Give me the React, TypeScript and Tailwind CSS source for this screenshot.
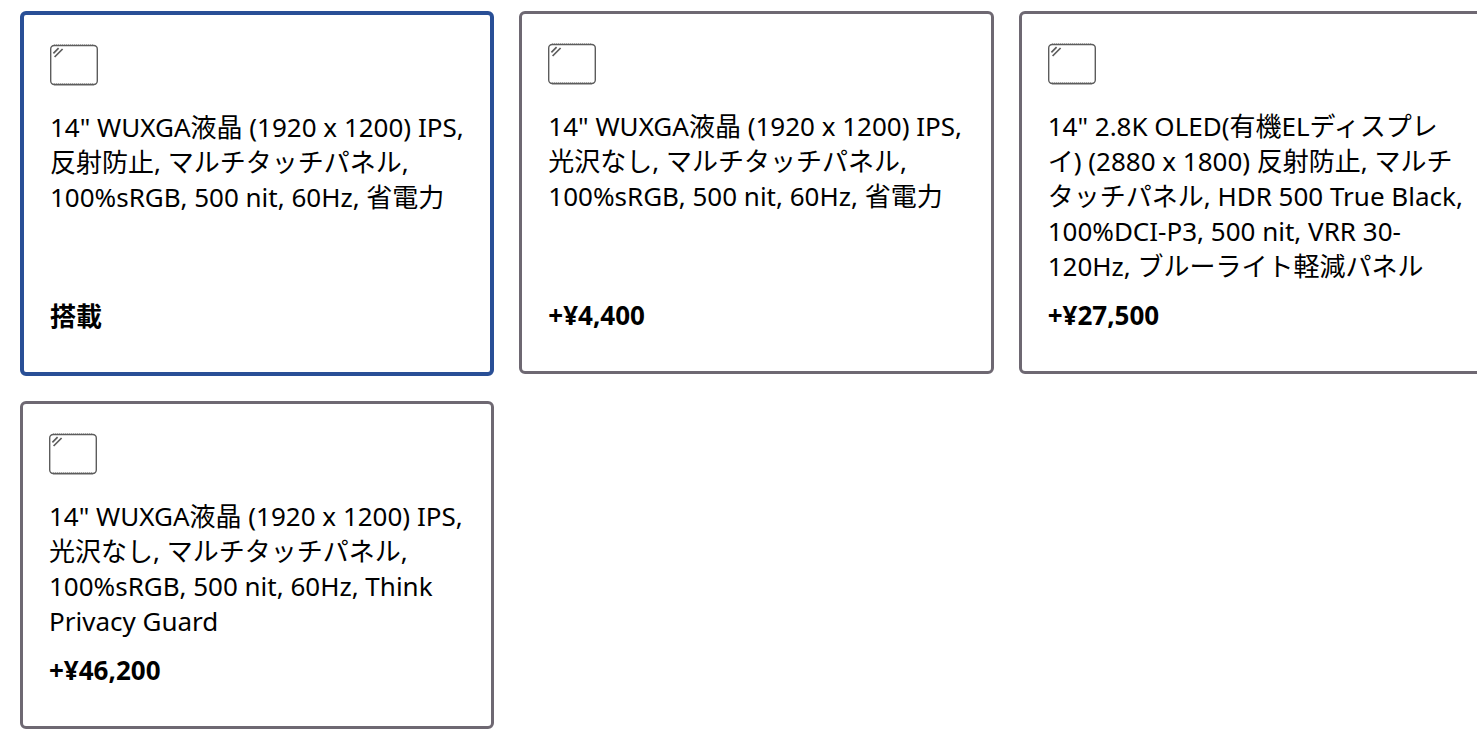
import React, { FC, useState } from "react";

type Option = {
  id: string;
  name: string;
  price: string;
};

const options: Option[] = [
  {
    id: "wuxga-touch",
    name: '14" WUXGA液晶 (1920 x 1200) IPS, 反射防止, マルチタッチパネル, 100%sRGB, 500 nit, 60Hz, 省電力',
    price: "搭載",
  },
  {
    id: "wuxga-matte",
    name: '14" WUXGA液晶 (1920 x 1200) IPS, 光沢なし, マルチタッチパネル, 100%sRGB, 500 nit, 60Hz, 省電力',
    price: "+¥4,400",
  },
  {
    id: "oled",
    name: '14" 2.8K OLED(有機ELディスプレイ) (2880 x 1800) 反射防止, マルチタッチパネル, HDR 500 True Black, 100%DCI-P3, 500 nit, VRR 30-120Hz, ブルーライト軽減パネル',
    price: "+¥27,500",
  },
  {
    id: "wuxga-privacy",
    name: '14" WUXGA液晶 (1920 x 1200) IPS, 光沢なし, マルチタッチパネル, 100%sRGB, 500 nit, 60Hz, Think Privacy Guard',
    price: "+¥46,200",
  },
];

const DisplayIcon: FC = () => (
  <svg
    className="size-12 shrink-0"
    viewBox="0 0 48 48"
    fill="none"
    stroke="#5c5c5c"
    aria-hidden="true"
  >
    <rect x="0.7" y="4.5" width="46.6" height="39" rx="3.5" strokeWidth="1.4" />
    <path d="M4 3.5H44M4 42.5H44" strokeDasharray="1 1" opacity="0.4" />
    <path d="M4 44.5H44" opacity="0.3" />
    <path d="M3.4 12.4L8.6 7.2M4.6 16L12.6 8" strokeWidth="1.7" />
  </svg>
);

type CardProps = {
  option: Option;
  selected: boolean;
  onSelect: () => void;
};

const OptionCard: FC<CardProps> = ({ option, selected, onSelect }) => (
  <button
    type="button"
    aria-pressed={selected}
    onClick={onSelect}
    className={`flex flex-col items-start rounded-md bg-white pt-[26px] pr-[22px] pb-[38px] pl-[26px] text-left ${
      selected ? "-mb-[2px] border-4 border-[#294f96]" : "border-3 border-[#6e6872]"
    }`}
  >
    <DisplayIcon />
    <span className="mt-[21px] flex-1">{option.name}</span>
    <span className="mt-[14px] font-bold">{option.price}</span>
  </button>
);

const App: FC = () => {
  const [selectedId, setSelectedId] = useState("wuxga-touch");

  return (
    <main
      lang="ja"
      className="overflow-hidden bg-white pt-[11px] pb-2 pl-5 font-['Noto_Sans','Noto_Sans_CJK_JP',sans-serif] text-[26px] leading-[35px] text-black"
    >
      {/* the last column runs past the right edge */}
      <div className="-mr-4 grid grid-cols-3 gap-x-[25px] gap-y-[27px]">
        {options.map((option) => (
          <OptionCard
            key={option.id}
            option={option}
            selected={option.id === selectedId}
            onSelect={() => setSelectedId(option.id)}
          />
        ))}
      </div>
    </main>
  );
};

export default App;
